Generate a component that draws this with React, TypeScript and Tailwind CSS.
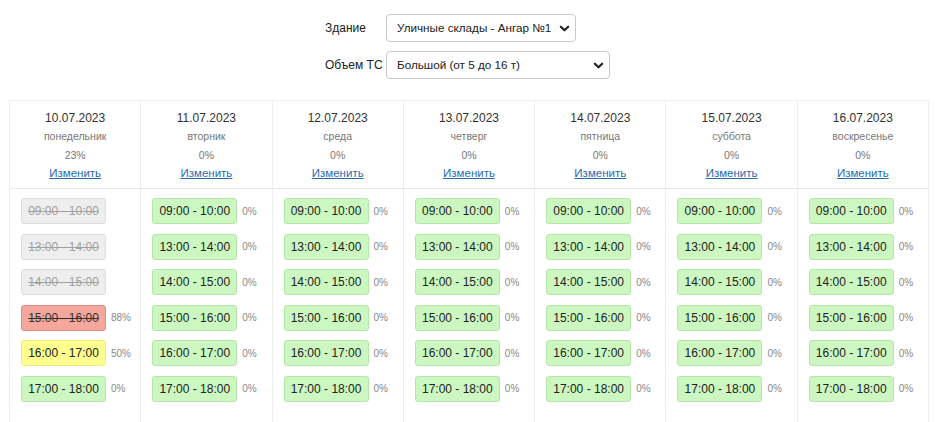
import React from "react";

const days = [
  { date: "10.07.2023", wd: "понедельник", pct: "23%" },
  { date: "11.07.2023", wd: "вторник", pct: "0%" },
  { date: "12.07.2023", wd: "среда", pct: "0%" },
  { date: "13.07.2023", wd: "четверг", pct: "0%" },
  { date: "14.07.2023", wd: "пятница", pct: "0%" },
  { date: "15.07.2023", wd: "суббота", pct: "0%" },
  { date: "16.07.2023", wd: "воскресенье", pct: "0%" },
];

const times = ["09:00 - 10:00", "13:00 - 14:00", "14:00 - 15:00", "15:00 - 16:00", "16:00 - 17:00", "17:00 - 18:00"];

type Kind = "green" | "grey" | "red" | "yellow";

function slotsFor(i: number): { t: string; kind: Kind; pct: string }[] {
  if (i === 0) {
    return [
      { t: times[0], kind: "grey", pct: "" },
      { t: times[1], kind: "grey", pct: "" },
      { t: times[2], kind: "grey", pct: "" },
      { t: times[3], kind: "red", pct: "88%" },
      { t: times[4], kind: "yellow", pct: "50%" },
      { t: times[5], kind: "green", pct: "0%" },
    ];
  }
  return times.map((t) => ({ t, kind: "green" as Kind, pct: "0%" }));
}

const kindCls: Record<Kind, string> = {
  green: "bg-[#ccf7c0] border-[#b4e6a8] text-[#222]",
  grey: "bg-[#eeeeee] border-[#dddddd] text-[#a0a0a0] line-through",
  red: "bg-[#f5a79c] border-[#dd8f86] text-[#333] line-through",
  yellow: "bg-[#ffff90] border-[#eeee80] text-[#222]",
};

function Chevron() {
  return (
    <svg width="11" height="11" viewBox="0 0 12 12" className="shrink-0">
      <path d="M2 4 L6 8 L10 4" fill="none" stroke="#222" strokeWidth="2.4" strokeLinecap="round" strokeLinejoin="round" />
    </svg>
  );
}

export default function App() {
  return (
    <div className="w-[944px] h-[422px] overflow-hidden bg-white text-[#333]" style={{ fontFamily: '"Liberation Sans", Arial, sans-serif' }}>
      <div className="pt-[14px] flex flex-col items-start ml-[325px] gap-[9px]">
        <div className="flex items-center">
          <span className="w-[61px] text-[12px] text-[#222] whitespace-nowrap">Здание</span>
          <div className="h-[28px] w-[190px] border border-[#c8c8c8] rounded-[4px] flex items-center justify-between pl-[10px] pr-[5px] text-[11.7px] text-[#222] whitespace-nowrap">
            <span>Уличные склады - Ангар №1</span>
            <Chevron />
          </div>
        </div>
        <div className="flex items-center">
          <span className="w-[61px] text-[12px] text-[#222] whitespace-nowrap">Объем ТС</span>
          <div className="h-[28px] w-[224px] border border-[#c8c8c8] rounded-[4px] flex items-center justify-between pl-[10px] pr-[5px] text-[11.7px] text-[#222] whitespace-nowrap">
            <span>Большой (от 5 до 16 т)</span>
            <Chevron />
          </div>
        </div>
      </div>
      <div className="ml-[9px] mt-[21px] w-[920px] border-t border-l border-[#eeeeee] grid grid-cols-7">
        {days.map((d, i) => (
          <div key={d.date} className="border-r border-[#eeeeee] flex flex-col">
            <div className="h-[88px] border-b border-[#e6e6e6] flex flex-col items-center pt-[9px]">
              <div className="text-[12px] leading-[16px] text-[#333]">{d.date}</div>
              <div className="text-[10.5px] leading-[14px] mt-[3px] text-[#777]">{d.wd}</div>
              <div className="text-[10.5px] leading-[14px] mt-[5px] text-[#777]">{d.pct}</div>
              <div className="text-[11.5px] leading-[16px] mt-[3px] text-[#2a6aaf] underline">Изменить</div>
            </div>
            <div className="flex flex-col gap-[9.6px] pt-[9px] pl-[11px] pb-[20px]">
              {slotsFor(i).map((s) => (
                <div key={s.t} className="flex items-center">
                  <div className={`w-[85px] h-[26px] border rounded-[3px] flex items-center justify-center text-[12px] ${kindCls[s.kind]}`}>
                    {s.t}
                  </div>
                  <span className="ml-[5px] text-[10px] text-[#888]">{s.pct}</span>
                </div>
              ))}
            </div>
          </div>
        ))}
      </div>
    </div>
  );
}
